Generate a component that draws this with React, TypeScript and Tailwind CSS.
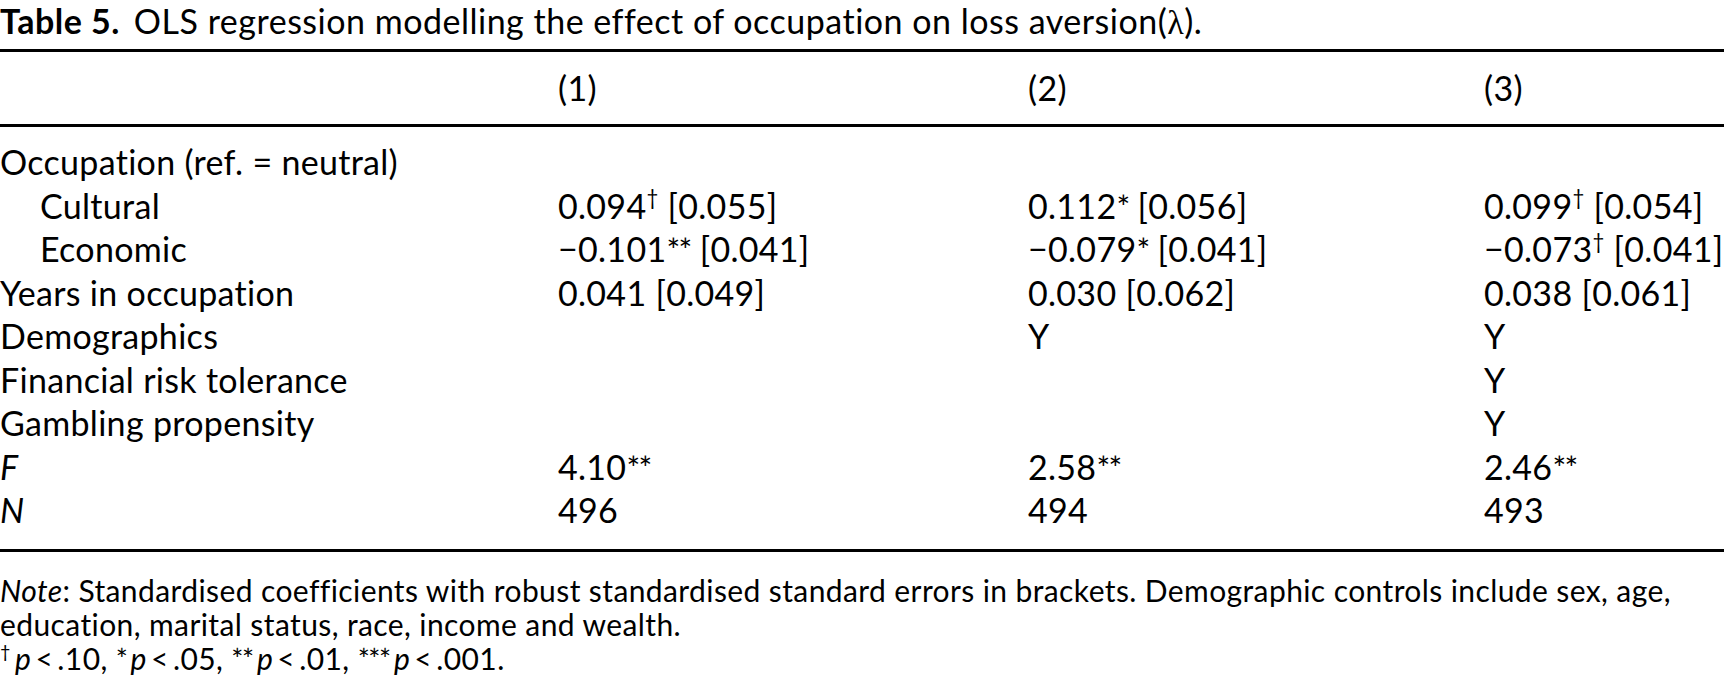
import React from "react";

type Row = {
  label: React.ReactNode;
  indent?: boolean;
  cells: React.ReactNode[];
};

// dagger sits as a small superscript, asterisks keep their own raised glyph
const Mark = ({ m }: { m: string }) =>
  m === "†" ? (
    <sup className="relative top-[-0.05em] align-super text-[0.6em] leading-none">†</sup>
  ) : (
    <span className="text-[0.95em] tracking-[-0.05em]">{m}</span>
  );

const Val = ({ v, mark, se }: { v: string; mark?: string; se?: string }) => (
  <span>
    {v}
    {mark && <Mark m={mark} />}
    {se && <> [{se}]</>}
  </span>
);

const rows: Row[] = [
  { label: "Occupation (ref. = neutral)", cells: ["", "", ""] },
  {
    label: "Cultural",
    indent: true,
    cells: [
      <Val v="0.094" mark="†" se="0.055" />,
      <Val v="0.112" mark="*" se="0.056" />,
      <Val v="0.099" mark="†" se="0.054" />,
    ],
  },
  {
    label: "Economic",
    indent: true,
    cells: [
      <Val v="−0.101" mark="**" se="0.041" />,
      <Val v="−0.079" mark="*" se="0.041" />,
      <Val v="−0.073" mark="†" se="0.041" />,
    ],
  },
  {
    label: "Years in occupation",
    cells: [<Val v="0.041" se="0.049" />, <Val v="0.030" se="0.062" />, <Val v="0.038" se="0.061" />],
  },
  { label: "Demographics", cells: ["", "Y", "Y"] },
  { label: "Financial risk tolerance", cells: ["", "", "Y"] },
  { label: "Gambling propensity", cells: ["", "", "Y"] },
  {
    label: <i>F</i>,
    cells: [<Val v="4.10" mark="**" />, <Val v="2.58" mark="**" />, <Val v="2.46" mark="**" />],
  },
  { label: <i>N</i>, cells: ["496", "494", "493"] },
];

export default function App() {
  return (
    <div className="w-[1724px] h-[680px] overflow-hidden bg-white text-black font-['Lato','Open_Sans',sans-serif]">
      {/* caption */}
      <div className="h-[49px] text-[34px] leading-[42px] tracking-[0.5px] whitespace-nowrap">
        <span className="font-bold">Table 5.</span>
        <span className="ml-[14px]">
          OLS regression modelling the effect of occupation on loss aversion(
          <span className="font-['Liberation_Serif',serif]">λ</span>).
        </span>
      </div>

      {/* table */}
      <div className="border-t-[3px] border-black text-[34px] tracking-[0.3px]">
        <div className="grid h-[72px] grid-cols-[558px_470px_456px_1fr] items-center leading-[72px]">
          <div />
          <div>(1)</div>
          <div>(2)</div>
          <div>(3)</div>
        </div>
        <div className="border-t-[3px] border-black pt-[13px] pb-[17px]">
          {rows.map((r, i) => (
            <div key={i} className="grid h-[43.5px] grid-cols-[558px_470px_456px_1fr] leading-[43.5px] whitespace-nowrap">
              <div className={r.indent ? "pl-[40px]" : ""}>{r.label}</div>
              {r.cells.map((c, j) => (
                <div key={j}>{c}</div>
              ))}
            </div>
          ))}
        </div>
      </div>

      {/* notes */}
      <div className="border-t-[3px] border-black pt-[21px] text-[30px] leading-[34px] tracking-[0.4px] whitespace-nowrap">
        <div>
          <i>Note</i>: Standardised coefficients with robust standardised standard errors in brackets. Demographic controls include sex, age,
        </div>
        <div>education, marital status, race, income and wealth.</div>
        <div>
          <Mark m="†" />
          {"\u2009"}
          <i>p</i>
          {"\u2009<\u2009.10, "}
          <Mark m="*" />
          {"\u2009"}
          <i>p</i>
          {"\u2009<\u2009.05, "}
          <Mark m="**" />
          {"\u2009"}
          <i>p</i>
          {"\u2009<\u2009.01, "}
          <Mark m="***" />
          {"\u2009"}
          <i>p</i>
          {"\u2009<\u2009.001."}
        </div>
      </div>
    </div>
  );
}
